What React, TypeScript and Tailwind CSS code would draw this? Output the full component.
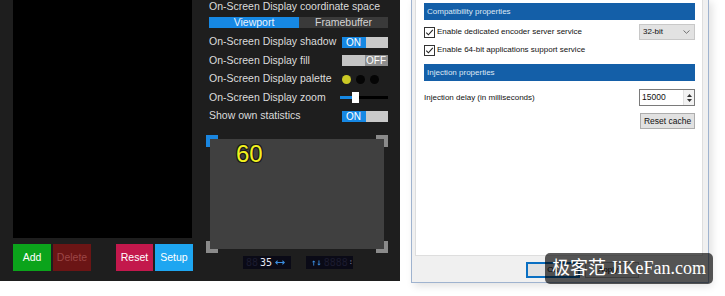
import React from "react";

function Toggle({ on }: { on: boolean }) {
  if (on) {
    return (
      <div className="flex w-[46px] h-[11px] text-[10px] leading-[11px]">
        <div className="w-[24px] bg-[#1688e4] text-white pl-[4px]">ON</div>
        <div className="flex-1 bg-[#c9c9c9]"></div>
      </div>
    );
  }
  return (
    <div className="flex w-[46px] h-[11px] text-[10px] leading-[11px]">
      <div className="flex-1 bg-[#c4c4c4]"></div>
      <div className="w-[23px] bg-[#8e8e8e] text-white text-right pr-[2px]">OFF</div>
    </div>
  );
}

function Row({ label, children }: { label: string; children: React.ReactNode }) {
  return (
    <div className="h-[18.5px] flex items-center justify-between pl-[3px]">
      <span className="text-[10.5px] text-[#dcdcdc]">{label}</span>
      {children}
    </div>
  );
}

function Check({ label }: { label: string }) {
  return (
    <div className="flex items-center gap-[2px]">
      <svg width="11" height="11" viewBox="0 0 11 11" className="shrink-0">
        <rect x="0.5" y="0.5" width="10" height="10" fill="#fff" stroke="#333" />
        <path d="M2.3 5.6 L4.4 7.8 L8.8 2.9" fill="none" stroke="#222" strokeWidth="1.1" />
      </svg>
      <span>{label}</span>
    </div>
  );
}

export default function App() {
  return (
    <div className="relative w-[725px] h-[296px] bg-white overflow-hidden flex items-start font-['Liberation_Sans',Arial,sans-serif]">
      {/* dark OSD panel */}
      <div className="w-[400px] h-[281px] bg-[#1e1e1e] flex shrink-0">
        <div className="w-[193px] pl-[13px] flex flex-col">
          <div className="w-[179px] h-[238px] bg-black"></div>
          <div className="mt-[6px] flex h-[27px] text-[10.5px] leading-[27px] text-center">
            <div className="w-[38px] bg-[#0ba41b] text-white">Add</div>
            <div className="w-[38px] ml-[2px] bg-[#6b1515] text-[#9c4646]">Delete</div>
            <div className="w-[37px] ml-[25px] bg-[#c3184c] text-white">Reset</div>
            <div className="w-[38px] ml-[2px] bg-[#1ea6f1] text-white">Setup</div>
          </div>
        </div>

        <div className="flex-1 pl-[13px] pr-[12px] flex flex-col">
          <div className="pl-[3px] h-[12px] text-[10.5px] leading-[12px] text-[#dcdcdc]">
            On-Screen Display coordinate space
          </div>
          <div className="mt-[5px] ml-[3px] flex h-[11px] text-[10.5px] leading-[11px] text-center">
            <div className="w-[90px] bg-[#1688e4] text-[#e8f2fc]">Viewport</div>
            <div className="flex-1 bg-[#3a3a3a] text-[#d4d4d4]">Framebuffer</div>
          </div>
          <div className="mt-[5px]">
            <Row label="On-Screen Display shadow">
              <Toggle on />
            </Row>
            <Row label="On-Screen Display fill">
              <Toggle on={false} />
            </Row>
            <Row label="On-Screen Display palette">
              <div className="flex gap-[5px] mr-[9px]">
                <div className="w-[9px] h-[9px] rounded-full bg-[#cbc925]"></div>
                <div className="w-[9px] h-[9px] rounded-full bg-[#050505]"></div>
                <div className="w-[9px] h-[9px] rounded-full bg-[#050505]"></div>
              </div>
            </Row>
            <Row label="On-Screen Display zoom">
              <div className="flex items-center w-[48px] h-[11px]">
                <div className="w-[12px] h-[3px] bg-[#1688e4]"></div>
                <div className="w-[7px] h-[11px] bg-white"></div>
                <div className="flex-1 h-[3px] bg-black"></div>
              </div>
            </Row>
            <Row label="Show own statistics">
              <Toggle on />
            </Row>
          </div>

          {/* preview frame */}
          <div className="relative mt-[9.5px] w-[182px] h-[118px] p-[4px]">
            <div className="absolute left-0 top-0 w-[12px] h-[12px] border-l-4 border-t-4 border-[#1a86e0]"></div>
            <div className="absolute right-0 top-0 w-[12px] h-[12px] border-r-4 border-t-4 border-[#8a8a8a]"></div>
            <div className="absolute left-0 bottom-0 w-[12px] h-[12px] border-l-4 border-b-4 border-[#8a8a8a]"></div>
            <div className="absolute right-0 bottom-0 w-[12px] h-[12px] border-r-4 border-b-4 border-[#8a8a8a]"></div>
            <div className="relative w-full h-full bg-[#404040] pl-[26px] pt-[3px]">
              <span className="text-[24px] leading-[24px] text-[#f2f21e] [text-shadow:-1px_-1px_0_#1a1a1a,1px_-1px_0_#1a1a1a,-1px_1px_0_#1a1a1a,1px_1px_0_#1a1a1a,0_1px_0_#1a1a1a,0_-1px_0_#1a1a1a]">
                60
              </span>
            </div>
          </div>

          {/* counters */}
          <div className="mt-[3px] flex h-[13px] font-['DejaVu_Sans_Mono',monospace] text-[10px] leading-[13px]">
            <div className="ml-[37px] w-[48px] bg-[#0a0a16] flex items-center pl-[3px]">
              <span className="text-[#1c1c30]">88</span>
              <span className="text-[#e6e6f0] ml-[2px]">35</span>
              <svg width="10" height="5" viewBox="0 0 10 5" className="ml-[3px]">
                <path d="M0 2.5 L2.5 0 L2.5 5Z M10 2.5 L7.5 0 L7.5 5Z" fill="#3a8de0" />
                <rect x="2" y="2" width="6" height="1" fill="#3a8de0" />
              </svg>
            </div>
            <div className="ml-[15px] w-[47px] bg-[#0a0a16] flex items-center pl-[6px]">
              <svg width="10" height="6" viewBox="0 0 10 6">
                <path d="M0 2.2 L2 0 L4 2.2Z M6 3.8 L8 6 L10 3.8Z" fill="#3a8de0" />
                <rect x="1.5" y="2" width="1" height="4" fill="#3a8de0" />
                <rect x="7.5" y="0" width="1" height="4" fill="#3a8de0" />
              </svg>
              <span className="text-[#1c1c30] ml-[3px]">8888</span>
              <span className="text-[#8a8aa0] text-[7px] ml-[1px]">:</span>
            </div>
          </div>
        </div>
      </div>

      {/* settings dialog */}
      <div className="ml-[11px] -mt-px w-[298px] h-[284px] shrink-0 border border-[#9fb3cf] bg-[#f0f0f0] shadow-[3px_3px_8px_rgba(0,0,0,0.12)] flex flex-col text-[8px] text-[#111]">
        <div className="ml-[3px] mr-[5px] h-[256px] bg-white border-x border-b border-[#dedede] pl-[8px] pr-[7px] flex flex-col">
          <div className="mt-[3px] h-[17px] bg-[#145fa8] text-[#dfe9f5] leading-[17px] pl-[3px]">
            Compatibility properties
          </div>
          <div className="mt-[4px] h-[16px] flex items-center justify-between">
            <Check label="Enable dedicated encoder server service" />
            <div className="w-[56px] h-[16px] bg-[#e2e2e2] border border-[#c8c8c8] flex items-center justify-between pl-[3px] pr-[4px]">
              <span>32-bit</span>
              <svg width="7" height="4" viewBox="0 0 7 4">
                <path d="M0.5 0.5 L3.5 3.3 L6.5 0.5" fill="none" stroke="#666" strokeWidth="0.9" />
              </svg>
            </div>
          </div>
          <div className="mt-[2px] h-[16px] flex items-center">
            <Check label="Enable 64-bit applications support service" />
          </div>
          <div className="mt-[6px] h-[17px] bg-[#145fa8] text-[#dfe9f5] leading-[17px] pl-[3px]">
            Injection properties
          </div>
          <div className="mt-[8px] h-[17px] flex items-center justify-between">
            <span>Injection delay (in milliseconds)</span>
            <div className="w-[56px] h-[17px] flex border border-[#7a7a7a] bg-white">
              <div className="flex-1 pl-[2px] leading-[15px] text-[8.5px]">15000</div>
              <div className="w-[11px] border-l border-[#e0e0e0] bg-[#f2f2f2] flex flex-col items-center justify-center gap-[2px]">
                <svg width="5" height="3" viewBox="0 0 5 3"><path d="M0 3 L2.5 0 L5 3Z" fill="#333" /></svg>
                <svg width="5" height="3" viewBox="0 0 5 3"><path d="M0 0 L2.5 3 L5 0Z" fill="#333" /></svg>
              </div>
            </div>
          </div>
          <div className="mt-[7px] flex justify-end">
            <div className="w-[55px] h-[16px] bg-[#e1e1e1] border border-[#adadad] text-center leading-[14px] text-[8.5px]">
              Reset cache
            </div>
          </div>
        </div>
        <div className="mt-[6px] flex pl-[114px]">
          <div className="w-[54px] h-[16px] border-2 border-[#0a6fc2] bg-[#e1e1e1] text-center leading-[12px]">OK</div>
          <div className="ml-[5px] w-[54px] h-[16px] border border-[#adadad] bg-[#e1e1e1] text-left pl-[12px] leading-[14px]">Apply</div>
        </div>
      </div>

      {/* watermark */}
      <div className="absolute left-[545px] top-[253px] w-[168px] h-[31px] rounded-[5px] bg-black/65 flex items-center justify-center text-white text-[18px] font-['Liberation_Serif','Noto_Sans_CJK_SC',serif]">
        极客范 JiKeFan.com
      </div>
    </div>
  );
}
